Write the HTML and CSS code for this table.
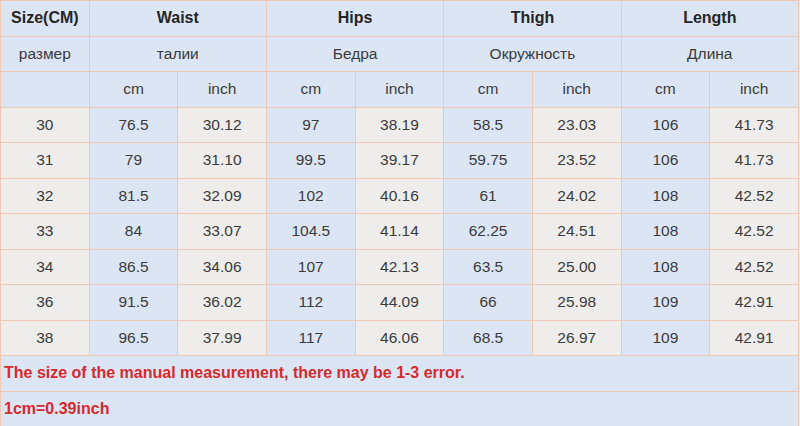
FILE: index.html
```html
<!DOCTYPE html>
<html>
<head>
<meta charset="utf-8">
<link rel="stylesheet" href="styles.css">
</head>
<body>
<div class="page">
<table class="sizes">
  <colgroup>
    <col><col><col><col><col><col><col><col><col>
  </colgroup>
  <tr class="head">
    <th class="c-size">Size(CM)</th>
    <th colspan="2">Waist</th>
    <th colspan="2">Hips</th>
    <th colspan="2">Thigh</th>
    <th colspan="2">Length</th>
  </tr>
  <tr class="sub">
    <td>размер</td>
    <td colspan="2">талии</td>
    <td colspan="2">Бедра</td>
    <td colspan="2">Окружность</td>
    <td colspan="2">Длина</td>
  </tr>
  <tr class="sub">
    <td></td>
    <td>cm</td><td>inch</td>
    <td>cm</td><td>inch</td>
    <td>cm</td><td>inch</td>
    <td>cm</td><td>inch</td>
  </tr>
  <tr class="data"><td>30</td><td>76.5</td><td>30.12</td><td>97</td><td>38.19</td><td>58.5</td><td>23.03</td><td>106</td><td>41.73</td></tr>
  <tr class="data"><td>31</td><td>79</td><td>31.10</td><td>99.5</td><td>39.17</td><td>59.75</td><td>23.52</td><td>106</td><td>41.73</td></tr>
  <tr class="data"><td>32</td><td>81.5</td><td>32.09</td><td>102</td><td>40.16</td><td>61</td><td>24.02</td><td>108</td><td>42.52</td></tr>
  <tr class="data"><td>33</td><td>84</td><td>33.07</td><td>104.5</td><td>41.14</td><td>62.25</td><td>24.51</td><td>108</td><td>42.52</td></tr>
  <tr class="data"><td>34</td><td>86.5</td><td>34.06</td><td>107</td><td>42.13</td><td>63.5</td><td>25.00</td><td>108</td><td>42.52</td></tr>
  <tr class="data"><td>36</td><td>91.5</td><td>36.02</td><td>112</td><td>44.09</td><td>66</td><td>25.98</td><td>109</td><td>42.91</td></tr>
  <tr class="data"><td>38</td><td>96.5</td><td>37.99</td><td>117</td><td>46.06</td><td>68.5</td><td>26.97</td><td>109</td><td>42.91</td></tr>
  <tr class="note"><td colspan="9">The size of the manual measurement, there may be 1-3 error.</td></tr>
  <tr class="note"><td colspan="9">1cm=0.39inch</td></tr>
</table>
</div>
</body>
</html>
```

FILE: styles.css
```css
html, body {
  margin: 0;
  padding: 0;
  background: #eeeceb;
}
.page {
  width: 800px;
  height: 426px;
  overflow: hidden;
  background: #eeeceb;
}
.sizes {
  width: 799px;
  table-layout: fixed;
  border-collapse: collapse;
  font-family: "Liberation Sans", Arial, sans-serif;
  color: #3b3b3b;
}
.sizes td, .sizes th {
  border: 1px solid #efc9b4;
  text-align: center;
  padding: 0;
  font-size: 15.5px;
  overflow: hidden;
  white-space: nowrap;
}
.sizes tr {
  height: 35.5px;
}
.head th {
  background: #dce5f3;
  font-weight: bold;
  font-size: 16px;
  color: #262626;
}
.sub td {
  background: #dce5f3;
}
.data td {
  background: #eeedeb;
}
.data td:nth-child(2n) {
  background: #dce5f3;
}
.note td {
  background: #dce5f3;
  text-align: left;
  padding-left: 3px;
  color: #d52a2e;
  font-weight: bold;
  font-size: 16px;
}
```
